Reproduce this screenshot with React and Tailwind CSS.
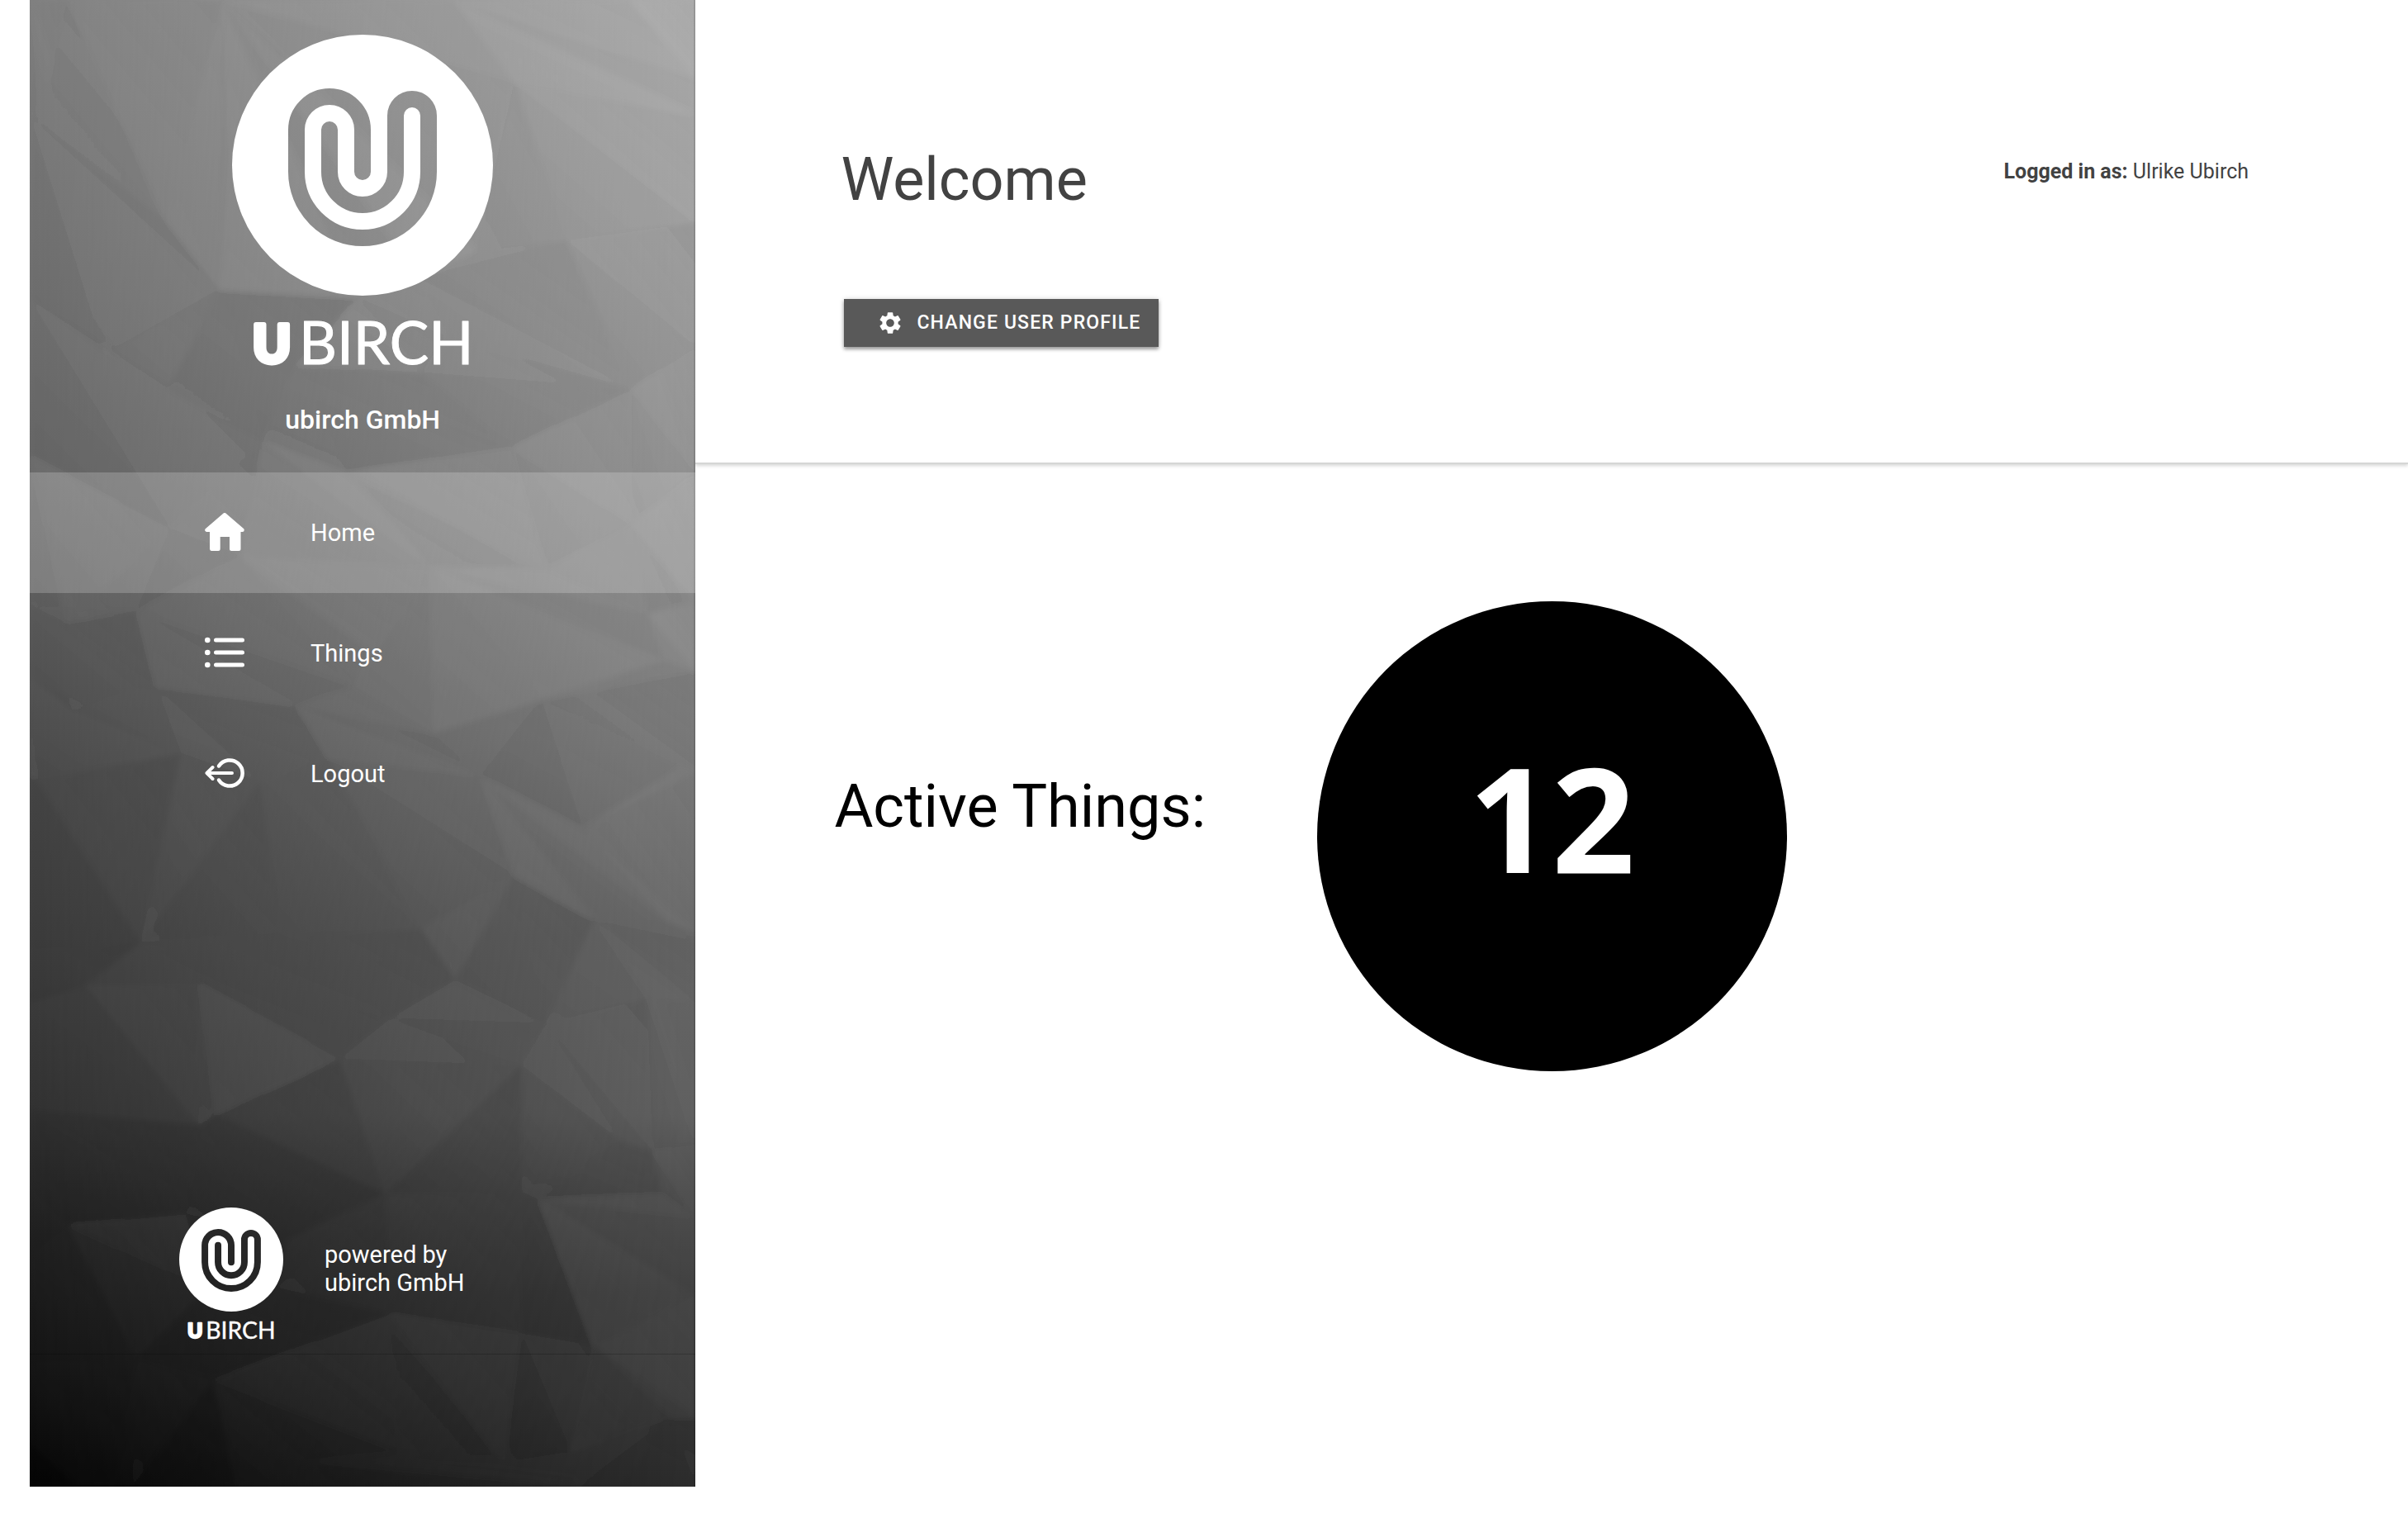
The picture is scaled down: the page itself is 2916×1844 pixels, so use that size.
import React, { useId } from "react";
import { MdSettings } from "react-icons/md";

/* Each facet: polygon points and a tone (negative darkens, positive lightens). */
const FACETS = [
  ["36,0 82,0 47,146 36,140", -0.01],
  ["82,0 269,0 203,269 47,146", 0.01],
  ["36,140 47,146 203,269 266,350 126,429 36,362", -0.04],
  ["269,0 345,66 275,180 266,350 203,269", 0.01],
  ["269,0 549,0 623,99 576,304 507,336 433,360 266,350 275,180 345,66", 0.02],
  ["549,0 762,0 842,95 842,140 623,99", 0.02],
  ["762,0 842,0 842,95", 0.04],
  ["623,99 842,140 842,269 686,291", 0],
  ["623,99 686,291 576,304", -0.03],
  ["36,362 126,429 203,471 318,534 206,640 36,552", -0.04],
  ["266,350 203,471 126,429", -0.03],
  ["266,350 433,360 359,443 318,534 203,471", -0.06],
  ["433,360 507,336 538,407 510,451 359,443", -0.01],
  ["507,336 576,304 686,291 765,471 538,407", -0.03],
  ["686,291 842,269 842,420 765,471", -0.02],
  ["359,443 510,451 620,542 420,572 318,534", -0.05],
  ["510,451 538,407 765,471 620,542", -0.04],
  ["765,471 842,420 842,572 765,635", 0],
  ["620,542 765,471 765,635 661,689", 0],
  ["36,552 206,640 80,754 36,733", 0],
  ["206,640 318,534 291,673 165,740 80,754", -0.02],
  ["318,534 420,572 521,687 291,673", 0.02],
  ["420,572 620,542 661,689 521,687", 0.01],
  ["765,635 842,572 842,730 784,743", 0.01],
  ["661,689 765,635 784,743", 0.02],
  ["36,733 80,754 165,740 189,831 88,861 36,820", -0.05],
  ["165,740 291,673 428,831 359,855 189,831", 0],
  ["291,673 521,687 450,790 428,831", 0.03],
  ["521,687 655,847 524,888 428,831 450,790", 0.04],
  ["521,687 661,689 784,743 804,799 655,847", 0.04],
  ["784,743 842,730 842,813 804,799", 0.05],
  ["655,847 804,799 842,813 842,935 823,928", 0.01],
  ["655,847 823,928 705,1003 581,940 524,888", -0.02],
  ["36,820 88,861 219,912 44,944 36,940", -0.03],
  ["189,831 359,855 398,918 315,946 219,912 88,861", -0.04],
  ["359,855 428,831 524,888 581,940 398,918", 0.01],
  ["44,944 219,912 170,1141", -0.08],
  ["36,940 44,944 170,1141 36,1150", -0.12],
  ["219,912 315,946 170,1141", -0.04],
  ["315,946 340,1131 170,1141", -0.08],
  ["315,946 398,918 510,1125 340,1131", -0.05],
  ["398,918 581,940 623,1060 510,1125", -0.02],
  ["581,940 705,1003 806,1114 719,1114 623,1060", 0.02],
  ["705,1003 823,928 842,935 842,1130 806,1114", 0.04],
  ["510,1125 623,1060 551,1186", 0],
  ["623,1060 719,1114 661,1239 551,1186", -0.05],
  ["719,1114 806,1114 842,1140 842,1215 784,1208 661,1239", 0],
  ["340,1131 510,1125 551,1186 472,1233", -0.07],
  ["170,1141 340,1131 472,1233 411,1282 241,1191 104,1193", -0.06],
  ["36,1150 170,1141 104,1193 36,1215", -0.12],
  ["36,1215 104,1193 241,1362 36,1343", -0.08],
  ["104,1193 241,1191 241,1362", -0.02],
  ["241,1191 411,1282 261,1349 241,1362", 0],
  ["411,1282 466,1445 261,1349", -0.1],
  ["411,1282 472,1233 631,1290 466,1445", -0.03],
  ["631,1290 631,1443 466,1445", -0.1],
  ["472,1233 551,1186 661,1239 631,1290", -0.03],
  ["661,1239 784,1208 790,1394 751,1381 631,1290", -0.02],
  ["784,1208 842,1215 842,1385 790,1394", 0],
  ["631,1290 751,1381 631,1443", -0.06],
  ["751,1381 790,1394 801,1445 653,1453 631,1443", -0.06],
  ["790,1394 842,1385 842,1475 801,1445", 0],
  ["36,1343 241,1362 225,1470 82,1483 36,1430", -0.15],
  ["241,1362 261,1349 466,1445 350,1500 225,1470", -0.16],
  ["225,1470 350,1500 335,1559 250,1560", -0.15],
  ["466,1445 631,1443 631,1614 472,1591", -0.06],
  ["466,1445 472,1591 335,1559 350,1500", -0.08],
  ["631,1443 653,1453 719,1629 631,1614", -0.09],
  ["653,1453 801,1445 842,1475 842,1567 719,1629", 0.02],
  ["82,1483 225,1470 250,1560 165,1644", 0],
  ["36,1430 82,1483 36,1527", -0.15],
  ["36,1527 82,1483 165,1644 36,1652", -0.12],
  ["165,1644 250,1560 335,1559 472,1591 258,1671", -0.12],
  ["258,1671 472,1591 483,1758 373,1769", 0],
  ["472,1591 631,1614 609,1771 483,1758", 0.01],
  ["631,1614 719,1629 691,1758 609,1771", -0.02],
  ["719,1629 812,1716 691,1758", 0.01],
  ["719,1629 842,1567 842,1716 812,1716", 0.03],
  ["36,1652 165,1644 140,1800 93,1800 36,1747", -0.1],
  ["165,1644 258,1671 160,1800 140,1800", -0.06],
  ["258,1671 285,1800 160,1800", -0.18],
  ["258,1671 373,1769 410,1800 285,1800", 0],
  ["36,1747 93,1800 36,1800", -0.4],
  ["373,1769 483,1758 609,1771 691,1758 700,1800 410,1800", 0],
  ["812,1716 842,1716 842,1800 700,1800 691,1758", -0.03],
];

/* Splits every larger facet into triangles around its first corner. */
const TRIANGLES = FACETS.flatMap(([points]) => {
  const [hub, ...rest] = points.split(" ");
  return rest.length < 3 ? [] : rest.slice(1).map((corner, i) => [`${hub} ${rest[i]} ${corner}`, i % 2]);
});

const LEFT = [[0, "#808080"], [20, "#747474"], [31, "#6b6b6b"], [41, "#5e5e5e"], [52, "#4e4e4e"], [63, "#454545"], [75, "#373737"], [83, "#252525"], [92, "#181818"], [100, "#080808"]];
const RIGHT = [[0, "#acacac"], [16, "#a2a2a2"], [31, "#949494"], [41, "#888888"], [50, "#7c7c7c"], [63, "#666666"], [75, "#606060"], [80, "#505050"], [87, "#404040"], [94, "#383838"], [100, "#2e2e2e"]];

function MeshBackground() {
  return (
    <svg
      className="absolute inset-0 h-full w-full"
      viewBox="36 0 806 1800"
      preserveAspectRatio="none"
      aria-hidden="true"
    >
      <defs>
        <linearGradient id="mesh-left" x1="0" y1="0" x2="0" y2="1">
          {LEFT.map(([at, color]) => <stop key={at} offset={`${at}%`} stopColor={color} />)}
        </linearGradient>
        <linearGradient id="mesh-right" x1="0" y1="0" x2="0" y2="1">
          {RIGHT.map(([at, color]) => <stop key={at} offset={`${at}%`} stopColor={color} />)}
        </linearGradient>
        <linearGradient id="mesh-fade">
          <stop offset="0" stopColor="#000" />
          <stop offset="1" stopColor="#fff" />
        </linearGradient>
        <linearGradient id="facet-sheen" x1="1" y1="0" x2="0" y2="1">
          <stop offset="0" stopColor="#000" stopOpacity="0.04" />
          <stop offset="0.5" stopColor="#000" stopOpacity="0" />
          <stop offset="1" stopColor="#fff" stopOpacity="0.02" />
        </linearGradient>
        <mask id="mesh-mask" style={{ maskType: "luminance" }}>
          <rect x="36" width="806" height="1800" fill="url(#mesh-fade)" />
        </mask>
        <filter id="mesh-soft" x="0" y="0" width="1" height="1">
          <feGaussianBlur stdDeviation="3" />
        </filter>
      </defs>
      <rect x="36" width="806" height="1800" fill="url(#mesh-left)" />
      <rect x="36" width="806" height="1800" fill="url(#mesh-right)" mask="url(#mesh-mask)" />
      <g filter="url(#mesh-soft)">
        {FACETS.map(([points, tone]) => (
          <g key={points}>
            <polygon points={points} fill={tone < 0 ? "#000" : "#fff"} fillOpacity={Math.abs(tone)} />
            <polygon points={points} fill="url(#facet-sheen)" />
          </g>
        ))}
        {TRIANGLES.map(([points, odd]) => (
          <polygon key={points} points={points} fill={odd ? "#000" : "#fff"} fillOpacity={odd ? 0.015 : 0.01} />
        ))}
      </g>
      <path d="M36 1639.500H842" stroke="#000" strokeOpacity="0.2" />
      <path d="M841 0V1800" stroke="#000" strokeOpacity="0.15" strokeWidth="2" />
    </svg>
  );
}

function Logo({ className }) {
  const id = useId();
  return (
    <svg className={className} viewBox="0 0 316 424" role="img" aria-label="ubirch">
      <mask id={id}>
        <rect width="316" height="316" fill="#fff" />
        <path
          d="M158 166V115A40 40 0 0 0 78 115V166A80 80 0 0 0 238 166V98A20 20 0 0 0 198 98V166A40 40 0 0 1 118 166V115"
          fill="none"
          stroke="#000"
          strokeWidth="20"
          strokeLinecap="round"
        />
      </mask>
      <circle cx="158" cy="158" r="158" fill="#fff" mask={`url(#${id})`} />
      <g fill="#fff" className="font-[Lato,sans-serif]">
        <text x="25" y="397" fontSize="62" fontWeight="900" stroke="#fff" strokeWidth="6" strokeLinejoin="round">U</text>
        <text x="81" y="399" fontSize="71" fontWeight="400" stroke="#fff" strokeWidth="1" strokeLinejoin="round">BIRCH</text>
      </g>
    </svg>
  );
}

function HomeIcon() {
  return (
    <svg className="h-12 w-12" viewBox="0 0 48 48" fill="#fff" aria-hidden="true">
      <path d="M24 2.200L2.500 20.800H45.500Z" stroke="#fff" strokeWidth="4.500" strokeLinejoin="round" />
      <path d="M6 19H43.500V43.500a2.500 2.500 0 0 1-2.500 2.500H32.500a2.500 2.500 0 0 1-2.500-2.500V29H18.700V43.500a2.500 2.500 0 0 1-2.500 2.500H8.500a2.500 2.500 0 0 1-2.500-2.500Z" />
    </svg>
  );
}

function ListIcon() {
  return (
    <svg className="h-12 w-12" viewBox="0 0 48 48" fill="#fff" aria-hidden="true">
      <circle cx="3.300" cy="8" r="3.300" />
      <circle cx="3.300" cy="23" r="3.300" />
      <circle cx="3.300" cy="38" r="3.300" />
      <path d="M13.500 8H45.500M13.500 23H45.500M13.500 38H45.500" stroke="#fff" strokeWidth="5" strokeLinecap="round" />
    </svg>
  );
}

function LogoutIcon() {
  return (
    <svg className="h-12 w-12" viewBox="0 0 48 48" fill="none" stroke="#fff" strokeLinecap="round" strokeLinejoin="round" aria-hidden="true">
      <path d="M17 14.500A15.600 15.600 0 1 1 17 31.500" strokeWidth="4.500" />
      <path d="M3 23H33M9.500 16L2.500 23L9.500 30" strokeWidth="4" />
    </svg>
  );
}

const MENU = [
  { label: "Home", Icon: HomeIcon, active: true },
  { label: "Things", Icon: ListIcon },
  { label: "Logout", Icon: LogoutIcon },
];

function Sidebar() {
  return (
    <aside className="relative flex w-[28%] flex-col overflow-hidden text-white">
      <MeshBackground />
      <div className="relative flex flex-col items-center pt-[42px]">
        <Logo className="w-[316px]" />
        <p className="mt-[22px] text-[32px] leading-[40px] font-medium">ubirch GmbH</p>
      </div>
      <nav className="relative mt-[44px]">
        <ul>
          {MENU.map(({ label, Icon, active }) => (
            <li key={label}>
              <a
                href={`#${label.toLowerCase()}`}
                aria-current={active ? "page" : undefined}
                className={`flex h-[146px] items-center gap-20 pl-[212px] text-[29px] leading-[34px] ${active ? "bg-white/20" : ""}`}
              >
                <Icon />
                {label}
              </a>
            </li>
          ))}
        </ul>
      </nav>
      <div className="relative mt-auto flex gap-[50px] pb-[169px] pl-[181px]">
        <Logo className="w-[126px]" />
        <p className="pt-[40px] text-[29px] leading-[34px]">
          powered by
          <br />
          ubirch GmbH
        </p>
      </div>
    </aside>
  );
}

export default function App() {
  return (
    <div className="flex min-h-screen bg-white pb-11 pl-9 font-[Roboto,sans-serif] text-black">
      <Sidebar />
      <main className="min-w-0 flex-1">
        <header className="border-b-2 border-[#d5d6d5] pt-[176px] pr-[193px] pb-[140px] pl-[176px] text-[#424242] shadow-[0_2px_4px_rgba(0,0,0,0.16)]">
          <div className="flex items-start justify-between">
            <h1 className="text-[72px] leading-[84px]">Welcome</h1>
            <p className="pt-[14px] text-[25px] leading-[36px]">
              <strong className="font-bold">Logged in as:</strong> Ulrike Ubirch
            </p>
          </div>
          <button
            type="button"
            className="mt-[102px] ml-1 flex h-[58px] items-center gap-4 bg-[#595959] pr-[22px] pl-[40px] text-[23px] font-medium tracking-wider text-white shadow-[0_3px_4px_rgba(0,0,0,0.35),0_0_6px_rgba(0,0,0,0.15)]"
          >
            <MdSettings className="size-8" aria-hidden="true" />
            CHANGE USER PROFILE
          </button>
        </header>
        <section className="grid grid-cols-[1fr_auto_1fr] items-center pt-[166px]">
          <h2 className="pb-[72px] pl-[168px] text-[72px] leading-[84px]">Active Things:</h2>
          <div className="flex size-[569px] items-center justify-center rounded-full bg-black pb-[48px]">
            <span className="font-['Open_Sans',sans-serif] text-[176px] leading-[200px] font-bold text-white">12</span>
          </div>
        </section>
      </main>
    </div>
  );
}
